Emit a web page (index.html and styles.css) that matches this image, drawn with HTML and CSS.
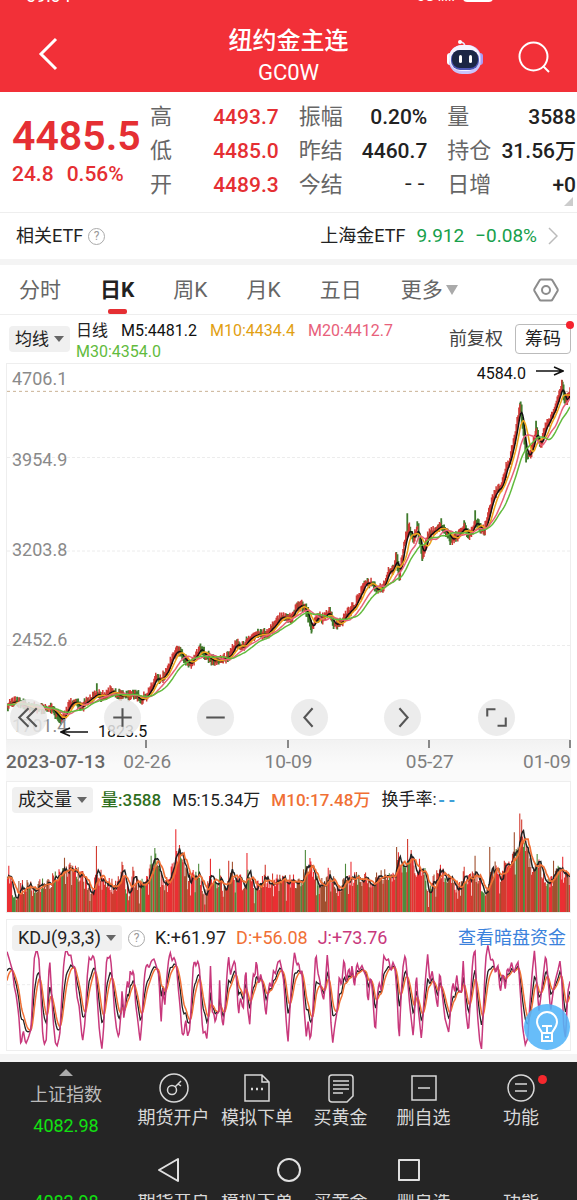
FILE: index.html
```
<!DOCTYPE html>
<html lang="zh-CN">
<head>
    <meta charset="UTF-8">
    <meta name="viewport" content="width=device-width, initial-scale=1.0">
    <title>纽约金主连 GC0W</title>
    <link rel="stylesheet" href="styles.css">
</head>
<body>

    <header class="header">
        <div class="status-bar" aria-hidden="true">
            <span>09:04</span>
            <span class="status-right">5G ııııı <i class="battery"></i></span>
        </div>
        <div class="title-bar">
            <div class="title-side">
                <button class="icon-btn back" aria-label="返回">
                    <svg width="20" height="34" viewBox="0 0 20 34"><path d="M18 2 3 17 18 32" fill="none" stroke="#fff" stroke-width="3"/></svg>
                </button>
            </div>
            <div class="title-text">
                <h1>纽约金主连</h1>
                <p>GC0W</p>
            </div>
            <div class="title-side title-actions">
                <button class="icon-btn" aria-label="智能助手">
                    <svg width="38" height="36" viewBox="0 0 38 36">
                        <path d="M19 8Q19 4 15 3" fill="none" stroke="#e9e4fb" stroke-width="1.6"/>
                        <circle cx="14" cy="3" r="2" fill="#fff"/>
                        <rect x="1" y="14" width="6" height="12" rx="3" fill="#fff"/>
                        <rect x="31" y="14" width="6" height="12" rx="3" fill="#a99bf5"/>
                        <rect x="3" y="6" width="32" height="29" rx="13" fill="#c9c4fb"/>
                        <rect x="3" y="6" width="31" height="26" rx="13" fill="#f6f4ff"/>
                        <rect x="5" y="11" width="28" height="20" rx="9" fill="#4d57b5"/>
                        <rect x="6" y="11" width="26" height="18" rx="8" fill="#1b2645"/>
                        <rect x="13" y="16" width="3" height="8" rx="1.5" fill="#fff"/>
                        <rect x="23" y="16" width="3" height="8" rx="1.5" fill="#fff"/>
                    </svg>
                </button>
                <button class="icon-btn" aria-label="搜索">
                    <svg width="32" height="32" viewBox="0 0 32 32" fill="none" stroke="#fff" stroke-width="2"><circle cx="15.500" cy="15.500" r="14"/><path d="M25 25 31 31"/></svg>
                </button>
            </div>
        </div>
    </header>

    <section class="quote">
        <div class="quote-price">
            <strong class="price">4485.5</strong>
            <div class="change"><span>24.8</span><span>0.56%</span></div>
        </div>
        <dl class="quote-grid">
            <div><dt>高</dt><dd class="up">4493.7</dd></div>
            <div><dt>振幅</dt><dd>0.20%</dd></div>
            <div><dt>量</dt><dd>3588</dd></div>
            <div><dt>低</dt><dd class="up">4485.0</dd></div>
            <div><dt>昨结</dt><dd>4460.7</dd></div>
            <div><dt>持仓</dt><dd>31.56万</dd></div>
            <div><dt>开</dt><dd class="up">4489.3</dd></div>
            <div><dt>今结</dt><dd class="dash">--</dd></div>
            <div><dt>日增</dt><dd>+0</dd></div>
        </dl>
        <i class="corner"></i>
    </section>

    <section class="etf">
        <span>相关ETF</span>
        <button class="help" aria-label="说明">?</button>
        <a class="etf-link" href="#etf">
            <span>上海金ETF</span>
            <span class="etf-num">9.912</span>
            <span class="etf-num">−0.08%</span>
            <svg width="10" height="18" viewBox="0 0 10 18"><path d="M1 1 9 9 1 17" fill="none" stroke="#bbb" stroke-width="1.500"/></svg>
        </a>
    </section>

    <nav class="tabs">
        <button>分时</button>
        <button class="active">日K</button>
        <button>周K</button>
        <button>月K</button>
        <button>五日</button>
        <button class="more">更多</button>
        <button class="settings" aria-label="图表设置">
            <svg width="26" height="24" viewBox="0 0 26 24" fill="none" stroke="#8c8c8c" stroke-width="2"><path d="M8 1.500H18Q19 1.500 19.500 2.500L24.500 11Q25 12 24.500 13L19.500 21.500Q19 22.500 18 22.500H8Q7 22.500 6.500 21.500L1.500 13Q1 12 1.500 11L6.500 2.500Q7 1.500 8 1.500Z"/><circle cx="13" cy="12" r="4"/></svg>
        </button>
    </nav>

    <main class="charts">
        <div class="legend">
            <label class="picker"><select aria-label="主图指标"><option>均线</option></select></label>
            <div class="legend-values">
                <span class="period">日线</span>
                <span class="m5">M5:4481.2</span>
                <span class="m10">M10:4434.4</span>
                <span class="m20">M20:4412.7</span>
                <span class="m30">M30:4354.0</span>
            </div>
            <button class="plain-btn">前复权</button>
            <button class="chip-btn">筹码</button>
        </div>

        <div class="panel price-panel">
            <svg id="price-chart" class="plot" viewBox="6 363 564 377" preserveAspectRatio="none"></svg>
            <div class="y-axis">
                <span>4706.1</span>
                <span>3954.9</span>
                <span>3203.8</span>
                <span>2452.6</span>
                <span>1701.4</span>
            </div>
            <div class="mark mark-high">4584.0
                <svg width="28" height="10" viewBox="0 0 28 10"><path d="M0 5H27M18 1 27 5 18 9" fill="none" stroke="#111" stroke-width="1.500"/></svg>
            </div>
            <div class="mark mark-low">
                <svg width="28" height="10" viewBox="0 0 28 10"><path d="M28 5H1M10 1 1 5 10 9" fill="none" stroke="#111" stroke-width="1.500"/></svg>
                1823.5
            </div>
            <div class="tools">
                <button aria-label="最早"><svg viewBox="0 0 36 36"><path d="M18 9 9 18 18 27M26 9 17 18 26 27"/></svg></button>
                <button aria-label="放大"><svg viewBox="0 0 36 36"><path d="M18 9V27M9 18H27"/></svg></button>
                <button aria-label="缩小"><svg viewBox="0 0 36 36"><path d="M9 18H27"/></svg></button>
                <button aria-label="向左"><svg viewBox="0 0 36 36"><path d="M21 9 13 18 21 27"/></svg></button>
                <button aria-label="向右"><svg viewBox="0 0 36 36"><path d="M15 9 23 18 15 27"/></svg></button>
                <button aria-label="全屏"><svg viewBox="0 0 36 36"><path d="M17 10H9V17M19 26H27V18"/></svg></button>
            </div>
        </div>

        <div class="x-axis">
            <div class="ticks"><i></i><i></i><i></i><i></i></div>
            <div class="dates">
                <span class="first">2023-07-13</span>
                <span>02-26</span>
                <span>10-09</span>
                <span>05-27</span>
                <span>01-09</span>
            </div>
        </div>

        <div class="panel volume-panel">
            <svg id="volume-chart" class="plot" viewBox="6 781 564 132" preserveAspectRatio="none"></svg>
            <div class="panel-head volume-head">
                <label class="picker"><select aria-label="副图指标一"><option>成交量</option></select></label>
                <span class="vol">量:3588</span>
                <span>M5:15.34万</span>
                <span class="orange">M10:17.48万</span>
                <span>换手率:<b class="turnover">--</b></span>
            </div>
        </div>

        <div class="panel kdj-panel">
            <svg id="kdj-chart" class="plot" viewBox="16 12 1535 394" preserveAspectRatio="none"></svg>
            <div class="panel-head kdj-head">
                <label class="picker"><select aria-label="副图指标二"><option>KDJ(9,3,3)</option></select></label>
                <button class="help" aria-label="指标说明">?</button>
                <span>K:+61.97</span>
                <span class="orange">D:+56.08</span>
                <span class="pink">J:+73.76</span>
                <a href="#funds">查看暗盘资金</a>
            </div>
            <button class="bulb" aria-label="提示">
                <svg width="46" height="46" viewBox="0 0 46 46" fill="none" stroke="#fff" stroke-width="2"><path d="M18 29C17 26 13 23 13 18a10 10 0 0 1 20 0C33 23 29 26 28 29ZM18 29V37H28V29M18 22H28M23 22V29M21 33H25"/></svg>
            </button>
        </div>
    </main>

    <footer class="footer">
        <nav class="bottom-nav">
            <a class="index" href="#index">
                <i class="arrow-up"></i>
                <span>上证指数</span>
                <b>4082.98</b>
            </a>
            <a href="#open">
                <svg width="30" height="30" viewBox="0 0 30 30"><circle cx="15" cy="15" r="14"/><circle cx="13" cy="17" r="4.500"/><path d="M16 14 22 8M19 11 22 13"/></svg>
                <span>期货开户</span>
            </a>
            <a href="#demo">
                <svg width="30" height="30" viewBox="0 0 30 30"><path d="M3 2H20L27 9V28H3ZM20 2V9H27"/><path d="M9 16H11M14 16H16M19 16H21" stroke-width="2.500"/></svg>
                <span>模拟下单</span>
            </a>
            <a href="#gold">
                <svg width="30" height="30" viewBox="0 0 30 30"><path d="M6 2H24Q27 2 27 5V23L21 29H6Q3 29 3 26V5Q3 2 6 2ZM7 8H23M7 12H23M7 16H23M7 20H17"/></svg>
                <span>买黄金</span>
            </a>
            <a href="#remove">
                <svg width="30" height="30" viewBox="0 0 30 30"><path d="M3 3H27V27H3ZM9 15H21"/></svg>
                <span>删自选</span>
            </a>
            <a class="has-dot" href="#more">
                <svg width="30" height="30" viewBox="0 0 30 30"><circle cx="15" cy="15" r="13"/><path d="M9 11H21M9 18H21"/></svg>
                <span>功能</span>
            </a>
        </nav>
        <div class="system-nav">
            <button aria-label="返回"><svg width="24" height="26" viewBox="0 0 24 26"><path d="M21 2V24L2 13Z"/></svg></button>
            <button aria-label="主屏幕"><svg width="26" height="26" viewBox="0 0 26 26"><circle cx="13" cy="13" r="11"/></svg></button>
            <button aria-label="最近任务"><svg width="24" height="24" viewBox="0 0 24 24"><rect x="2" y="2" width="20" height="20"/></svg></button>
        </div>
        <div class="bottom-edge" aria-hidden="true">
            <b>4082.98</b><span>期货开户</span><span>模拟下单</span><span>买黄金</span><span>删自选</span><span>功能</span>
        </div>
    </footer>

    <script src="chart.js"></script>
</body>
</html>
```
FILE: styles.css
```
* {
    box-sizing: border-box;
}

body {
    margin: 0;
    font-family: Roboto, "Noto Sans CJK SC", sans-serif;
    font-size: 18px;
    line-height: 24px;
    color: #222;
    background-color: #fff;
}

h1, p, dl, dd {
    margin: 0;
}

button {
    padding: 0;
    border: none;
    background: none;
    font: inherit;
    color: inherit;
}

a {
    color: inherit;
    text-decoration: none;
}

svg {
    display: block;
}

/* Header */
.header {
    height: 92px;
    background-color: #f23038;
    color: #fff;
}

.status-bar {
    display: flex;
    justify-content: space-between;
    align-items: flex-end;
    height: 2px;
    padding: 0 84px 0 26px;
    overflow: hidden;
    font-size: 18px;
    line-height: 12px;
}

.status-right {
    display: flex;
    gap: 8px;
    font-size: 14px;
}

.battery {
    width: 30px;
    height: 12px;
    border-radius: 4px;
    background-color: #fff;
}

.title-bar {
    display: flex;
    align-items: center;
    height: 90px;
    padding: 20px 27px 0;
}

.title-side {
    flex: 1;
}

.back {
    margin-left: 11px;
}

.title-text {
    text-align: center;
}

.title-text h1 {
    font-size: 24px;
    font-weight: 500;
    line-height: 32px;
}

.title-text p {
    font-size: 22px;
    line-height: 32px;
}

.title-actions {
    display: flex;
    justify-content: flex-end;
    align-items: center;
    gap: 34px;
}

/* Quote */
.quote {
    position: relative;
    display: flex;
    height: 121px;
    padding: 8px 1px 0 12px;
    border-bottom: 1px solid #eee;
}

.quote-price {
    flex: none;
    width: 138px;
    padding-top: 12px;
    color: #e52f33;
}

.price {
    display: block;
    font-size: 41px;
    font-weight: 600;
    line-height: 48px;
}

.change {
    display: flex;
    gap: 13px;
    font-size: 21px;
    font-weight: 500;
    line-height: 28px;
}

.quote-grid {
    flex: 1;
    display: grid;
    grid-template-columns: repeat(3, 1fr);
    grid-auto-rows: 34px;
    column-gap: 20px;
    line-height: 34px;
}

.quote-grid div {
    display: flex;
    justify-content: space-between;
    white-space: nowrap;
}

.quote-grid dt {
    font-size: 22px;
    color: #666;
}

.quote-grid dd {
    font-size: 21px;
    font-weight: 500;
}

.quote-grid .up {
    color: #e52f33;
}

.quote-grid .dash {
    font-family: "Liberation Mono", monospace;
}

.corner {
    position: absolute;
    right: 4px;
    bottom: 6px;
    border-left: 9px solid transparent;
    border-bottom: 9px solid #ccc;
}

/* ETF */
.etf {
    display: flex;
    align-items: center;
    height: 52px;
    padding: 0 19px 0 16px;
    border-bottom: 6px solid #f4f4f4;
}

.help {
    width: 17px;
    height: 17px;
    margin-left: 5px;
    border: 1px solid #aaa;
    border-radius: 50%;
    font-size: 12px;
    line-height: 14px;
    color: #999;
}

.etf-link {
    display: flex;
    align-items: center;
    gap: 11px;
    margin-left: auto;
}

.etf-num {
    font-size: 19px;
    color: #17a04b;
}

/* Tabs */
.tabs {
    display: flex;
    gap: 39px;
    height: 50px;
    padding: 0 18px 0 19px;
    border-bottom: 1px solid #eee;
    font-size: 21px;
    color: #666;
}

.tabs .active {
    position: relative;
    font-weight: 700;
    color: #222;
}

.tabs .active::after {
    content: '';
    position: absolute;
    left: 50%;
    bottom: 0;
    width: 19px;
    height: 5px;
    margin-left: -9px;
    border-radius: 2px;
    background-color: #e52f33;
}

.tabs .more {
    display: flex;
    align-items: center;
    gap: 3px;
}

.more::after {
    content: '';
    border: 6px solid transparent;
    border-top: 10px solid #aaa;
    border-bottom: none;
}

.tabs .settings {
    margin-left: auto;
}

/* Charts */
.charts {
    padding: 0 6px 3px;
    border-bottom: 8px solid #f4f4f4;
}

.picker {
    display: flex;
    align-items: center;
    flex: none;
    height: 26px;
    padding-right: 6px;
    border-radius: 4px;
    background-color: #f0f0f0;
}

.picker select {
    padding: 0 5px 0 6px;
    border: none;
    appearance: none;
    background: none;
    font: inherit;
    color: #222;
}

.picker::after {
    content: '';
    border: 5px solid transparent;
    border-top: 6px solid #666;
    border-bottom: none;
}

.legend {
    display: flex;
    align-items: center;
    height: 48px;
    padding-left: 3px;
}

.legend .picker {
    font-size: 17px;
}

.legend-values {
    flex: 1;
    display: flex;
    flex-wrap: wrap;
    column-gap: 13px;
    margin-left: 6px;
    padding-top: 3px;
    font-size: 16px;
    line-height: 21px;
}

.m5 { color: #111; }
.m10 { color: #e2a012; }
.m20 { color: #e8607a; }
.m30 { color: #62bb3d; }

.plain-btn {
    margin-right: 12px;
    color: #444;
}

.chip-btn {
    position: relative;
    width: 56px;
    height: 30px;
    border: 1px solid #bbb;
    border-radius: 4px;
}

.chip-btn::after {
    content: '';
    position: absolute;
    top: -4px;
    right: -4px;
    width: 8px;
    height: 8px;
    border-radius: 50%;
    background-color: #f5222d;
}

/* The plot and everything above it share one grid cell */
.panel {
    position: relative;
    display: grid;
    border: 1px solid #eee;
}

.panel > .plot,
.panel > .y-axis,
.panel > .tools,
.panel > .panel-head {
    grid-area: 1 / 1;
}

.plot {
    width: 100%;
    height: 100%;
    min-height: 0;
}

.plot * {
    vector-effect: non-scaling-stroke;
}

.price-panel {
    grid-template-rows: 375px;
}

.y-axis {
    display: grid;
    grid-template-rows: 81fr 90fr 90fr 86fr 20px;
    padding: 5px 5px 3px;
    line-height: 20px;
    color: #8a8a8a;
}

.mark {
    position: absolute;
    display: flex;
    align-items: center;
    gap: 10px;
    font-size: 16px;
    line-height: 18px;
    color: #111;
}

.mark-high {
    top: 1px;
    right: 6px;
}

.mark-high svg {
    margin-bottom: 6px;
}

.mark-low {
    left: 53px;
    bottom: -2px;
}

.tools {
    position: relative;
    align-self: end;
    display: flex;
    justify-content: space-between;
    padding: 0 55px 3px 3px;
}

.tools button {
    width: 37px;
    height: 37px;
    border-radius: 50%;
    background-color: rgba(233, 233, 233, 0.85);
}

.tools path {
    fill: none;
    stroke: #555;
    stroke-width: 2;
}

.x-axis {
    height: 41px;
    background-image: linear-gradient(#f2f2f2, #fafafa 60%);
}

.ticks {
    display: flex;
    height: 8px;
}

.ticks i {
    flex: 1;
    border-right: 2px solid #888;
}

.dates {
    display: grid;
    grid-template-columns: 105fr 72fr 210fr 72fr 105fr;
    padding-top: 2px;
    font-size: 19px;
    text-align: center;
    white-space: nowrap;
    color: #808080;
}

.dates .first {
    text-align: left;
    font-weight: 500;
    color: #666;
}

.dates span:last-child {
    text-align: right;
}

.volume-panel {
    grid-template-rows: 130px;
}

.kdj-panel {
    grid-template-rows: 130px;
    margin-top: 6px;
}

.panel-head {
    align-self: start;
    display: flex;
    align-items: center;
    padding: 5px 4px 0 5px;
    white-space: nowrap;
}

.volume-head {
    gap: 11px;
    font-size: 17px;
}

.volume-head .picker {
    font-size: 18px;
    margin-right: -3px;
}

.vol {
    color: #2f6f1e;
}

.vol, .orange {
    font-weight: 500;
}

.orange {
    color: #f07035;
}

.pink {
    color: #c8387c;
}

.turnover {
    font-family: "Liberation Mono", monospace;
    color: #3fa0d8;
}

.kdj-head {
    gap: 10px;
}

.kdj-head .help {
    margin-left: -4px;
}

.kdj-head .orange {
    font-weight: 400;
}

.kdj-head a {
    margin-left: auto;
    color: #3b82dc;
}

.bulb {
    position: absolute;
    right: 0;
    bottom: 0;
    width: 46px;
    height: 46px;
    border-radius: 50%;
    background-color: rgba(82, 180, 248, 0.88);
}

/* Footer */
.footer {
    background-color: #252525;
    color: #d8d8d8;
}

.bottom-nav,
.bottom-edge {
    display: grid;
    grid-template-columns: 132fr 83fr 84fr 83fr 83fr 112fr;
    justify-items: center;
    white-space: nowrap;
}

.bottom-nav {
    height: 82px;
}

.bottom-nav a {
    position: relative;
    display: flex;
    flex-direction: column;
    align-items: center;
    padding-top: 11px;
}

.bottom-nav svg {
    margin-bottom: 3px;
    fill: none;
    stroke: #d8d8d8;
    stroke-width: 1.5;
}

.bottom-nav .index {
    gap: 7px;
    padding-top: 7px;
    color: #bbb;
}

.arrow-up {
    border: 7px solid transparent;
    border-top: none;
    border-bottom: 7px solid #aaa;
}

.footer b {
    font-weight: 400;
    color: #12e012;
}

.has-dot::after {
    content: '';
    position: absolute;
    top: 13px;
    right: -8px;
    width: 9px;
    height: 9px;
    border-radius: 50%;
    background-color: #f5282d;
}

.system-nav {
    display: flex;
    justify-content: center;
    align-items: center;
    gap: 95px;
    height: 50px;
    padding-top: 2px;
}

.system-nav svg {
    fill: none;
    stroke: #e0e0e0;
    stroke-width: 2;
    stroke-linejoin: round;
}

.bottom-edge {
    height: 6px;
    overflow: hidden;
    line-height: 16px;
}
```
FILE: chart.js
```
const DAYS = 618;
const SVG_NS = "http://www.w3.org/2000/svg";

// [x, y] turning points of the daily close
const closes = [
    [6,707],[13,702],[20,705],[30,708],[40,710],[50,709],[56,716],[60,722],[64,716],[68,706],[73,702],[80,708],
    [86,703],[92,698],[96,693],[100,699],[104,697],[110,692],[118,696],[126,697],[132,695],[140,700],[146,697],
    [150,690],[155,679],[160,680],[164,676],[168,668],[172,657],[176,651],[180,654],[184,661],[189,664],[194,658],
    [199,650],[204,656],[212,661],[220,661],[228,658],[235,646],[242,647],[248,640],[256,634],[265,635],[272,628],
    [280,617],[286,619],[290,619],[295,610],[301,605],[306,612],[311,629],[316,617],[322,620],[328,612],[333,624],
    [339,624],[346,615],[353,608],[359,597],[365,584],[371,583],[377,590],[383,587],[388,573],[393,570],[396,557],
    [399,577],[402,555],[405,538],[409,529],[413,540],[417,527],[422,555],[427,537],[434,530],[441,527],[448,534],
    [451,540],[457,536],[464,527],[469,537],[475,522],[480,529],[484,531],[488,517],[492,500],[496,490],[501,487],
    [505,472],[510,457],[514,440],[518,415],[520,404],[523,430],[526,455],[531,452],[536,430],[540,445],[545,428],
    [550,418],[555,408],[558,398],[562,384],[565,402],[570,390]
];

// Long wicks
const wicks = [[96,684],[176,647],[199,646],[235,642],[246,637],[301,602],[311,634],[364,581],[396,552],[399,580],
    [407,513],[417,521],[422,561],[441,518],[450,545],[464,520],[475,510],[520,402],[526,462],[536,420],[562,379]];

const volumes = [
    [6,874],[11,887],[14,900],[18,888],[30,888],[42,886],[52,880],[62,874],[72,870],[82,878],[88,893],[91,897],
    [96,873],[108,884],[114,889],[122,870],[128,896],[133,876],[138,887],[146,882],[155,858],[159,870],[163,888],
    [166,884],[172,866],[179,852],[188,877],[198,873],[204,901],[208,882],[214,880],[224,885],[237,871],[243,892],
    [248,874],[254,884],[262,883],[280,881],[300,882],[309,864],[320,887],[330,876],[338,894],[345,880],[370,881],
    [385,877],[392,882],[398,859],[404,872],[410,860],[416,874],[424,868],[428,903],[433,880],[445,874],[455,886],
    [465,877],[474,878],[485,890],[494,868],[500,875],[508,868],[517,852],[522,835],[531,870],[540,866],[548,886],
    [558,874],[570,882]
];

const volumeSpikes = [[8,866],[64,858],[69,863],[96,846],[121,862],[132,867],[150,856],[154,848],[175,829],[176,851],
    [198,864],[210,859],[219,869],[228,861],[232,862],[246,853],[265,865],[305,850],[328,868],[345,864],[351,862],
    [396,847],[407,839],[411,850],[419,859],[440,865],[464,867],[475,856],[490,847],[504,861],[514,832],[520,813],
    [522,819],[537,854],[554,861],[563,857]];

const jLine = [
    [16,108],[22,130],[27,150],[31,165],[36,215],[41,240],[48,300],[54,395],[60,345],[67,388],[74,370],[82,340],[86,230],
    [90,130],[97,100],[103,130],[108,230],[113,350],[117,390],[123,375],[126,300],[129,180],[133,140],[137,220],[142,320],
    [148,385],[153,393],[160,360],[166,230],[171,140],[177,98],[184,120],[190,118],[195,150],[201,155],[206,240],[213,275],
    [219,350],[222,380],[229,320],[235,180],[240,125],[244,135],[251,118],[256,140],[262,250],[268,350],[275,404],[280,330],
    [284,200],[288,125],[293,128],[298,120],[304,200],[309,290],[315,345],[321,370],[327,290],[330,215],[335,320],[340,240],
    [344,195],[348,225],[352,165],[356,180],[361,162],[367,270],[373,320],[379,380],[384,320],[388,220],[393,160],[398,145],
    [403,158],[410,135],[417,130],[424,155],[430,180],[436,330],[441,215],[446,275],[452,180],[457,130],[461,110],[466,135],
    [472,125],[478,150],[483,220],[488,275],[493,355],[498,362],[503,310],[508,365],[514,345],[519,260],[523,160],[527,135],
    [531,150],[537,135],[542,170],[546,290],[550,355],[556,350],[561,372],[566,300],[568,240],[571,145],[575,290],[580,295],
    [584,325],[589,290],[593,300],[595,180],[600,290],[605,338],[611,270],[615,190],[620,118],[625,180],[630,155],[637,133],
    [642,190],[647,305],[652,245],[660,285],[667,150],[672,280],[678,330],[682,240],[687,175],[692,185],[696,128],[702,205],
    [708,175],[714,215],[722,305],[727,240],[732,200],[737,220],[742,165],[748,175],[754,140],[760,135],[765,160],[771,200],
    [776,300],[782,385],[787,290],[793,180],[800,108],[806,150],[811,140],[816,175],[820,165],[826,280],[832,365],[837,320],
    [843,380],[849,310],[853,210],[858,105],[863,170],[868,190],[874,230],[879,255],[884,210],[889,115],[894,180],[899,320],
    [904,385],[910,330],[916,290],[922,180],[928,215],[935,125],[941,200],[948,155],[953,190],[957,145],[963,220],[970,140],
    [976,165],[984,150],[990,170],[996,185],[1000,270],[1007,180],[1012,220],[1020,360],[1026,240],[1030,200],[1036,225],
    [1043,120],[1050,135],[1057,130],[1062,170],[1068,140],[1074,155],[1080,250],[1085,385],[1090,250],[1096,150],[1102,115],
    [1108,190],[1114,270],[1124,370],[1129,240],[1132,165],[1138,290],[1146,375],[1152,270],[1157,190],[1163,115],[1169,200],
    [1175,165],[1181,210],[1190,280],[1196,165],[1203,240],[1210,310],[1221,355],[1228,230],[1232,200],[1237,235],[1242,175],
    [1247,225],[1255,230],[1260,135],[1267,290],[1274,355],[1281,220],[1286,130],[1292,98],[1298,290],[1305,380],[1310,404],
    [1316,250],[1321,130],[1327,88],[1335,135],[1341,130],[1348,175],[1354,145],[1361,235],[1368,170],[1375,225],[1380,155],
    [1385,170],[1392,140],[1398,175],[1404,150],[1410,138],[1416,240],[1422,340],[1429,390],[1436,370],[1442,260],[1448,170],
    [1454,105],[1460,190],[1466,290],[1471,250],[1478,180],[1485,115],[1492,200],[1498,290],[1505,230],[1512,190],[1518,165],
    [1524,135],[1529,200],[1534,340],[1539,370],[1545,230],[1551,198]
];

// Fixed seed, so the chart is the same on every load
let seed = 7;
function random() {
    seed = (seed * 16807) % 2147483647;
    return seed / 2147483647;
}

// One value per day between the turning points
function sample(points) {
    const start = points[0][0];
    const step = (points[points.length - 1][0] - start) / (DAYS - 1);
    const result = [];
    let k = 0;
    for (let i = 0; i < DAYS; i++) {
        const x = start + i * step;
        while (k < points.length - 2 && points[k + 1][0] < x) k++;
        const [x1, y1] = points[k];
        const [x2, y2] = points[k + 1];
        result.push([x, y1 + (y2 - y1) * (x - x1) / (x2 - x1)]);
    }
    return result;
}

function average(values, n) {
    return values.map(([x], i) => {
        let sum = 0;
        for (let j = i - n + 1; j <= i; j++) sum += values[Math.max(0, j)][1];
        return [x, sum / n];
    });
}

function addPath(svg, d, color, width, dash) {
    const path = document.createElementNS(SVG_NS, "path");
    path.setAttribute("d", d);
    path.setAttribute("fill", "none");
    path.setAttribute("stroke", color);
    path.setAttribute("stroke-width", width);
    if (dash) path.setAttribute("stroke-dasharray", dash);
    svg.appendChild(path);
}

function addLine(svg, values, color, width) {
    addPath(svg, "M" + values.map(([x, y]) => `${x.toFixed(1)} ${y.toFixed(1)}`).join("L"), color, width);
}

function dayIndex(x) {
    return Math.min(DAYS - 1, Math.max(0, Math.round((x - 6) / 564 * (DAYS - 1))));
}

function drawPrice() {
    const svg = document.getElementById("price-chart");
    addPath(svg, "M6 457H570M6 551H570M6 646H570", "#ececec", 1, "3 2");
    addPath(svg, "M6 390.5H570", "#c9b294", 1, "3 3");

    const days = sample(closes).map(([x, y]) => [x, y + (random() - 0.5) * 3]);
    const paths = { red: "", green: "" };
    days.forEach(([x, y], i) => {
        const open = i ? days[i - 1][1] : y + 1;
        const top = Math.min(open, y) - 1 - random() * 5;
        const bottom = Math.max(open, y) + 1 + random() * 4;
        paths[y <= open ? "red" : "green"] += `M${x.toFixed(1)} ${top.toFixed(1)}V${bottom.toFixed(1)}`;
    });
    wicks.forEach(([x, y]) => {
        const i = dayIndex(x);
        paths.green += `M${x} ${days[i][1].toFixed(1)}V${y}`;
    });
    addPath(svg, paths.green, "#3f7a2c", 1.8);
    addPath(svg, paths.red, "#cf3a36", 1.5);

    addLine(svg, average(days, 5), "#111", 1.5);
    addLine(svg, average(days, 10), "#eba51c", 1.6);
    addLine(svg, average(days, 20), "#e8607a", 1.5);
    addLine(svg, average(days, 30), "#62bb3d", 1.5);
}

function drawVolume() {
    const svg = document.getElementById("volume-chart");
    addPath(svg, "M6 846.5H570", "#ececec", 1, "3 2");

    const days = sample(volumes).map(([x, y]) => {
        const quiet = random() < 0.06 ? 14 : 0;
        return [x, Math.min(911, y + (random() - 0.5) * 16 + quiet)];
    });
    volumeSpikes.forEach(([x, y]) => days[dayIndex(x)][1] = y);

    const colors = ["#ea2f33", "#d23b30", "#4f8a3c", "#a0502f"];
    const paths = colors.map(() => "");
    let color = 0;
    days.forEach(([x, y], i) => {
        if (i % 2 === 0) {
            const r = random();
            color = r < 0.35 ? 0 : r < 0.6 ? 1 : r < 0.74 ? 2 : 3;
        }
        paths[color] += `M${x.toFixed(1)} 913V${y.toFixed(1)}`;
    });
    paths.forEach((d, i) => addPath(svg, d, colors[i], 1.1));

    addLine(svg, average(days, 5), "#222", 1.5);
    addLine(svg, average(days, 10), "#f07035", 1.7);
}

function drawKdj() {
    const svg = document.getElementById("kdj-chart");
    addPath(svg, "M16 208H1551", "#ececec", 1, "3 2");

    // J = 3K - 2D and D is a one-third smoothing of K, so both follow from J
    const j = sample(jLine);
    const k = [];
    const d = [];
    let prev = 210;
    j.forEach(([x, y]) => {
        const kValue = (y + prev * 4 / 3) * 3 / 7;
        prev = prev * 2 / 3 + kValue / 3;
        k.push([x, kValue]);
        d.push([x, prev]);
    });
    addLine(svg, k, "#222", 1.3);
    addLine(svg, d, "#f07035", 1.5);
    addLine(svg, j, "#c8387c", 1.5);
}

drawPrice();
drawVolume();
drawKdj();
```
